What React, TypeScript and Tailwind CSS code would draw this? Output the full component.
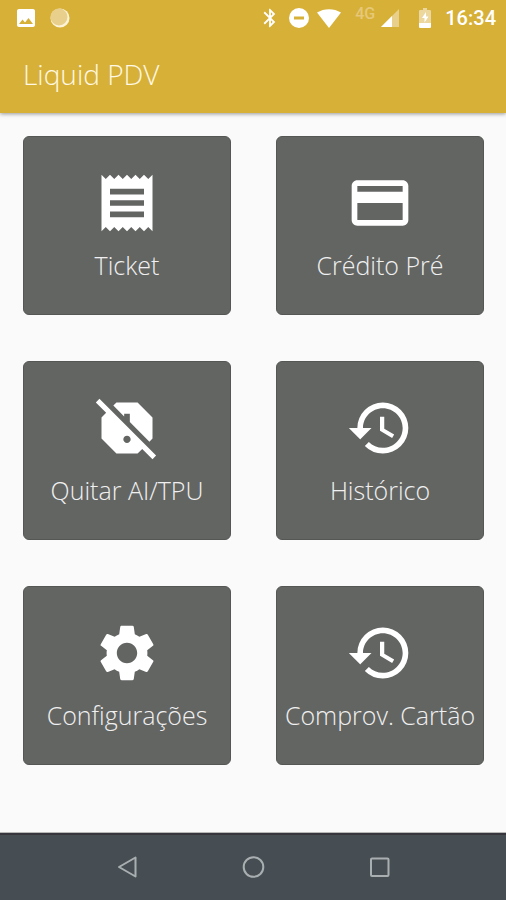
import { IconType } from "react-icons";
import {
  MdBluetooth,
  MdCreditCard,
  MdHistory,
  MdImage,
  MdReceipt,
  MdReportOff,
  MdSettings,
} from "react-icons/md";

interface MenuItem {
  label: string;
  icon: IconType;
}

const menuItems: MenuItem[] = [
  { label: "Ticket", icon: MdReceipt },
  { label: "Crédito Pré", icon: MdCreditCard },
  { label: "Quitar AI/TPU", icon: MdReportOff },
  { label: "Histórico", icon: MdHistory },
  { label: "Configurações", icon: MdSettings },
  { label: "Comprov. Cartão", icon: MdHistory },
];

function StatusBar() {
  return (
    <div className="flex h-9 items-center justify-between pl-3.5 pr-2.5">
      <div className="flex items-center gap-3">
        <MdImage className="size-6" />
        <svg viewBox="0 0 20 20" className="size-5">
          <circle cx="10" cy="10" r="9.5" fill="#fdf3d8" />
          <circle cx="9" cy="9" r="8.5" fill="#e8cf8b" />
        </svg>
      </div>
      <div className="flex items-center">
        <MdBluetooth className="size-[22px]" />
        <svg viewBox="0 0 20 20" className="ml-2 size-5">
          <circle cx="10" cy="10" r="10" fill="currentColor" />
          <path d="M5 8.500h10v3H5z" fill="#d7b037" />
        </svg>
        <svg viewBox="0 0 24 19" className="ml-2 h-[19px] w-6">
          <path d="M0 3.5C7 -1 17 -1 24 3.5L12 19z" fill="currentColor" />
        </svg>
        <span className="mb-2 ml-3.5 font-['Roboto',sans-serif] text-base font-medium leading-4 text-[#e6c878]">
          4G
        </span>
        <svg viewBox="0 0 18 18" className="ml-1.5 size-[18px]">
          <path d="M0 18L18 0V18z" fill="#e8cf8b" />
          <path d="M0 18L11 7V18z" fill="currentColor" />
        </svg>
        <svg viewBox="0 0 12 20" className="ml-5 h-5 w-3">
          <path d="M4 0h4v2h3.2l.8.8V15H0V2.800L.8 2H4z" fill="#ecd79e" />
          <path d="M0 15h12v4.200l-.8.8H.8l-.8-.8z" fill="currentColor" />
          <path d="M7 4L3 10h2.500v4.500L9.500 8.500H7z" fill="currentColor" />
        </svg>
        <span className="ml-3.5 font-['Roboto',sans-serif] text-xl font-medium leading-6">
          16:34
        </span>
      </div>
    </div>
  );
}

function MenuCard({ label, icon: Icon }: MenuItem) {
  return (
    <button
      type="button"
      className="flex h-[179px] flex-col items-center rounded-md border border-[#555755] bg-[#636563] pt-8 text-[#f0f0f0]"
    >
      <Icon className="size-[68px] shrink-0 text-white" />
      <span className="mt-2.5 whitespace-nowrap text-[25px] leading-9">
        {label}
      </span>
    </button>
  );
}

function NavigationBar() {
  return (
    <nav className="flex h-[67px] items-center justify-center gap-[102px] border-t-2 border-[#36363c] bg-[#464d53] pb-0.5 text-[#a9afb1] shadow-[0_-1px_0_#b8b8b8]">
      <button type="button" aria-label="Voltar">
        <svg viewBox="0 0 24 24" className="size-6" fill="none">
          <path
            d="M20.500 2.500V21.500L4 12z"
            stroke="currentColor"
            strokeWidth="2"
            strokeLinejoin="round"
          />
        </svg>
      </button>
      <button type="button" aria-label="Início">
        <svg viewBox="0 0 24 24" className="size-6" fill="none">
          <circle cx="12.500" cy="12" r="9.800" stroke="currentColor" strokeWidth="2" />
        </svg>
      </button>
      <button type="button" aria-label="Recentes">
        <svg viewBox="0 0 24 24" className="size-6" fill="none">
          <rect
            x="4"
            y="3.500"
            width="17.500"
            height="17.500"
            rx="1"
            stroke="currentColor"
            strokeWidth="2"
          />
        </svg>
      </button>
    </nav>
  );
}

export default function App() {
  return (
    <div className="flex min-h-screen flex-col bg-[#fafafa] font-['Open_Sans',sans-serif] font-light">
      <header className="bg-[#d7b037] text-white shadow-[0_1px_4px_rgba(0,0,0,0.4)]">
        <StatusBar />
        <h1 className="px-[23px] pb-[21px] pt-5 text-[28px] leading-9 text-[#fff8e4]">
          Liquid PDV
        </h1>
      </header>
      <main className="grid flex-1 grid-cols-2 content-start gap-x-[45px] gap-y-[46px] pl-[23px] pr-[22px] pt-[23px]">
        {menuItems.map((item) => (
          <MenuCard key={item.label} {...item} />
        ))}
      </main>
      <NavigationBar />
    </div>
  );
}
